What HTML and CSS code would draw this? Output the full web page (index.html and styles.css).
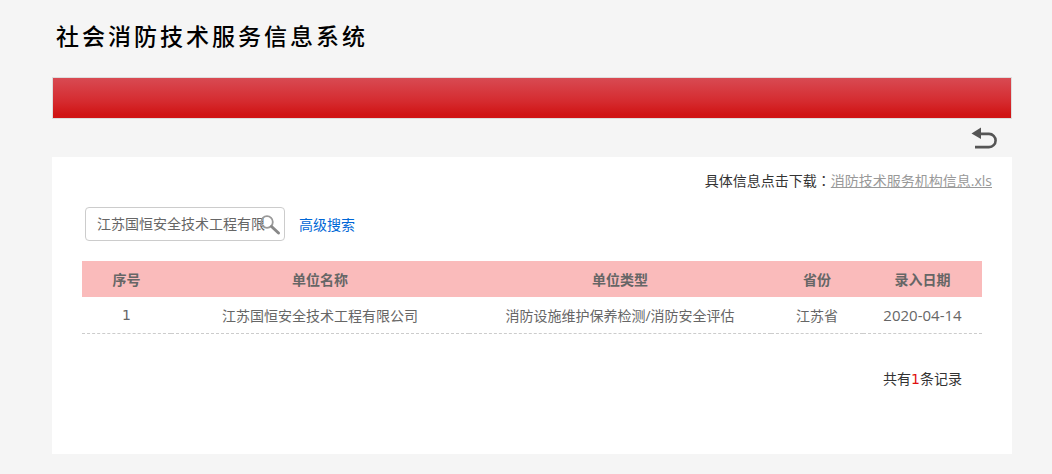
FILE: index.html
```html
<!DOCTYPE html>
<html lang="zh-CN">
<head>
<meta charset="utf-8">
<title>社会消防技术服务信息系统</title>
<link rel="stylesheet" href="styles.css">
</head>
<body>
<div class="page">
  <h1 class="title">社会消防技术服务信息系统</h1>
  <div class="redbar"></div>
  <div class="backrow">
    <a class="back" href="#" aria-label="返回">
      <svg width="26" height="22" viewBox="0 0 26 22"><path d="M10 0.5 L0.5 6.5 L10 12 V8.2 H18 A5.2 5.2 0 0 1 18 18.8 H4 V21.4 H18 A7.9 7.9 0 0 0 18 5.6 H10 Z" fill="#555"/></svg>
    </a>
  </div>
  <main class="panel">
    <p class="download">具体信息点击下载<span class="colon" lang="zh-TW">：</span><a href="#">消防技术服务机构信息.xls</a></p>
    <div class="searchrow">
      <div class="search">
        <span class="search-text">江苏国恒安全技术工程有限公司</span>
        <svg class="search-icon" width="22" height="22" viewBox="0 0 22 22"><circle cx="8" cy="8" r="5.8" fill="none" stroke="#999" stroke-width="1.8"/><path d="M12.5 12.5 L19.5 19" stroke="#888" stroke-width="3" stroke-linecap="round"/></svg>
      </div>
      <a class="advanced" href="#">高级搜索</a>
    </div>
    <table class="results">
      <colgroup>
        <col class="c1"><col class="c2"><col class="c3"><col class="c4"><col class="c5">
      </colgroup>
      <thead>
        <tr><th>序号</th><th>单位名称</th><th>单位类型</th><th>省份</th><th>录入日期</th></tr>
      </thead>
      <tbody>
        <tr><td class="index">1</td><td>江苏国恒安全技术工程有限公司</td><td>消防设施维护保养检测/消防安全评估</td><td>江苏省</td><td class="date">2020-04-14</td></tr>
      </tbody>
    </table>
    <p class="count">共有<span class="num">1</span>条记录</p>
  </main>
</div>
</body>
</html>
```
FILE: styles.css
```css
* { box-sizing: border-box; }
html, body { margin: 0; padding: 0; }
body {
  background: #f5f5f5;
  font-family: "Open Sans", "Noto Sans CJK SC", "Liberation Sans", sans-serif;
  font-size: 14px;
  color: #333;
}
.page { width: 960px; margin-left: 52px; height: 474px; overflow: hidden; }
.title {
  margin: 0;
  height: 77px;
  padding: 18px 0 0 4px;
  font-family: "Noto Sans CJK SC", sans-serif;
  font-size: 23px;
  line-height: 34px;
  font-weight: 500;
  letter-spacing: 3px;
  color: #000;
}
.redbar {
  width: 960px;
  height: 42px;
  border: 1px solid #ddd;
  background: linear-gradient(to bottom, #d84a52 0%, #d52a2e 60%, #d01414 92%);
}
.backrow { height: 38px; display: flex; justify-content: flex-end; align-items: flex-start; padding: 8px 15px 0 0; }
.back { display: block; height: 22px; }
.back svg { display: block; }
.panel { background: #fff; height: 297px; padding: 13px 20px 0 30px; }
.download { margin: 0; text-align: right; line-height: 20px; color: #333; }
.colon { font-family: "Noto Sans CJK TC", sans-serif; }
.download a { color: #999; text-decoration: underline; }
.searchrow { display: flex; align-items: center; margin: 16px 0 0 3px; height: 34px; }
.search {
  width: 200px;
  height: 34px;
  border: 1px solid #ccc;
  border-radius: 4px;
  padding: 0 0 0 11px;
  display: flex;
  align-items: center;
  position: relative;
  background: #fff;
}
.search-text { width: 168px; overflow: hidden; white-space: nowrap; color: #666; line-height: 32px; }
.search-icon { position: absolute; right: 3px; top: 6px; }
.advanced { margin-left: 14px; color: #0066d6; text-decoration: none; }
.results {
  width: 900px;
  margin-top: 20px;
  border-collapse: collapse;
  table-layout: fixed;
  text-align: center;
}
.c1 { width: 89px; }
.c2 { width: 298px; }
.c3 { width: 302px; }
.c4 { width: 92px; }
.c5 { width: 119px; }
.results th {
  height: 36px;
  background: #fabbbb;
  color: #666;
  font-weight: 700;
  padding: 0;
}
.results td {
  height: 36px;
  padding: 0;
  color: #666;
  border-bottom: 1px dashed #ccc;
}
.results td.index { font-family: "DejaVu Sans", sans-serif; font-size: 14px; }
.results td.date { font-size: 15px; }
.count { margin: 35px 30px 0 0; text-align: right; line-height: 20px; color: #333; }
.num { color: #e01010; font-family: "DejaVu Sans", sans-serif; font-size: 14px; }
```
